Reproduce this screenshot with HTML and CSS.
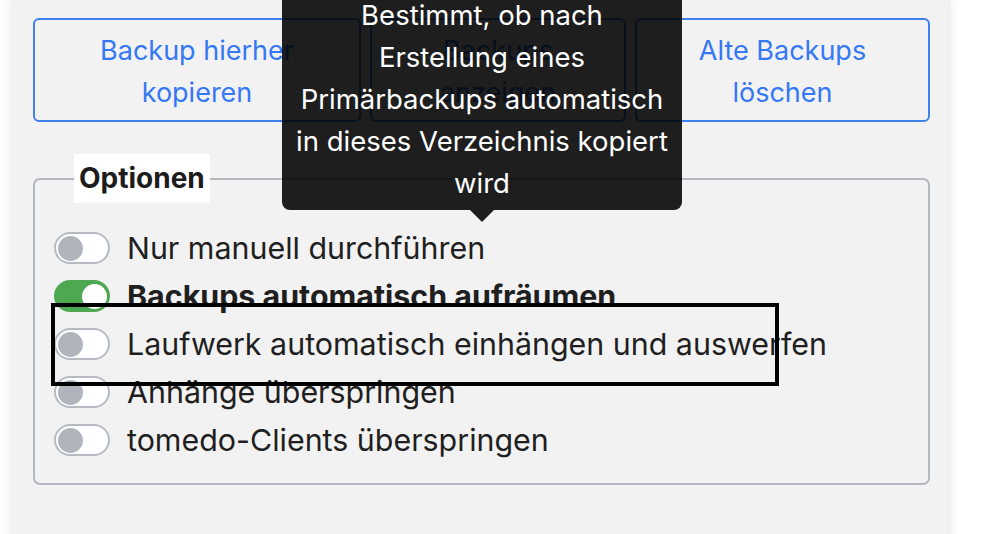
FILE: index.html
```html
<!DOCTYPE html>
<html lang="de">
<head>
<meta charset="utf-8">
<title>Backup Optionen</title>
<link rel="stylesheet" href="styles.css">
</head>
<body>
<div class="panel">
  <div class="actions">
    <button class="btn">Backup hierher kopieren</button>
    <button class="btn">Backups anzeigen</button>
    <button class="btn">Alte Backups löschen</button>
  </div>
  <fieldset class="options">
    <legend class="options-title">Optionen</legend>
    <div class="row"><span class="toggle"><span class="knob"></span></span><span class="label">Nur manuell durchführen</span></div>
    <div class="row"><span class="toggle on"><span class="knob"></span></span><span class="label strong">Backups automatisch aufräumen</span></div>
    <div class="row"><span class="toggle"><span class="knob"></span></span><span class="label">Laufwerk automatisch einhängen und auswerfen</span></div>
    <div class="row"><span class="toggle"><span class="knob"></span></span><span class="label">Anhänge überspringen</span></div>
    <div class="row"><span class="toggle"><span class="knob"></span></span><span class="label">tomedo-Clients überspringen</span></div>
  </fieldset>
  <div class="tooltip">Bestimmt, ob nach<br>Erstellung eines<br>Primärbackups automatisch<br>in dieses Verzeichnis kopiert<br>wird</div>
  <div class="highlight"></div>
</div>
</body>
</html>
```
FILE: styles.css
```css
html, body {
  margin: 0;
  padding: 0;
  background: #ffffff;
  overflow: hidden;
  height: 534px;
}
body {
  font-family: Inter, "Noto Sans", "Liberation Sans", sans-serif;
  color: #1f1f1f;
}
.panel {
  position: relative;
  margin-left: 10px;
  width: 941px;
  height: 560px;
  box-sizing: border-box;
  background: #f2f2f2;
  box-shadow: 0 0 10px rgba(0, 0, 0, 0.08);
  padding: 18px 0 0 23px;
}
.actions {
  display: grid;
  grid-template-columns: 328px 256px 295px;
  column-gap: 9px;
  width: 897px;
}
.btn {
  height: 104px;
  box-sizing: border-box;
  border: 2px solid #3d80ee;
  border-radius: 6px;
  background: transparent;
  color: #3478f6;
  font-family: inherit;
  font-size: 27px;
  line-height: 42px;
  padding: 10px 20px 6px;
  text-align: center;
}
.options {
  margin: 32px 0 0 0;
  width: 897px;
  box-sizing: border-box;
  min-width: 0;
  border: 2px solid #b3b8c0;
  border-radius: 7px;
  padding: 21px 19px 19px 19px;
}
.options-title {
  margin-left: 20px;
  padding: 0 5px;
  background: #ffffff;
  font-weight: 700;
  font-size: 28px;
  line-height: 49px;
  color: #1c1c1c;
}
.row {
  display: flex;
  align-items: center;
  gap: 17px;
  height: 48px;
}
.toggle {
  position: relative;
  flex: none;
  width: 56px;
  height: 32px;
  box-sizing: border-box;
  border: 2px solid #b6bbc3;
  border-radius: 16px;
  background: #ffffff;
}
.knob {
  position: absolute;
  top: 1.5px;
  left: 1.5px;
  width: 25px;
  height: 25px;
  border-radius: 50%;
  background: #b0b5bd;
}
.toggle.on {
  background: #4ea852;
  border-color: #4ea852;
}
.toggle.on .knob {
  left: auto;
  right: 1.5px;
  background: #ffffff;
}
.label {
  font-size: 30.4px;
  line-height: 48px;
  white-space: nowrap;
}
.label.strong {
  font-weight: 700;
}
.tooltip {
  position: absolute;
  left: 272px;
  top: -12px;
  width: 400px;
  box-sizing: border-box;
  padding: 6px 8px;
  background: rgba(0, 0, 0, 0.88);
  color: #ffffff;
  border-radius: 8px;
  font-size: 27.5px;
  line-height: 42px;
  text-align: center;
  white-space: nowrap;
}
.tooltip::after {
  content: "";
  position: absolute;
  left: 50%;
  bottom: -12px;
  margin-left: -12px;
  border-left: 12px solid transparent;
  border-right: 12px solid transparent;
  border-top: 12px solid rgba(0, 0, 0, 0.88);
}
.highlight {
  position: absolute;
  left: 41px;
  top: 303px;
  width: 728px;
  height: 83px;
  box-sizing: border-box;
  border: 4px solid #000000;
}
```
